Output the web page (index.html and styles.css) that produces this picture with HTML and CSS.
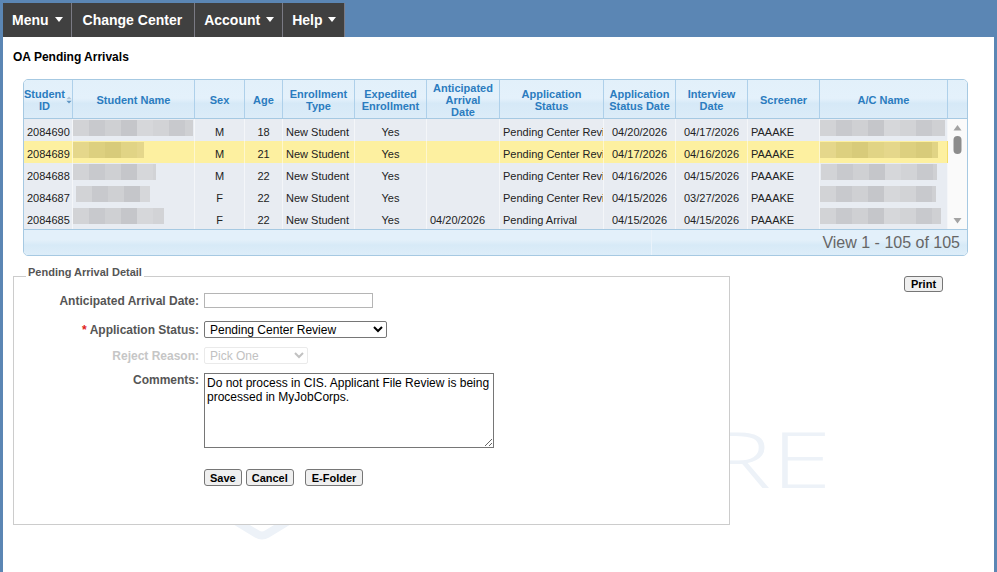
FILE: index.html
```html
<!DOCTYPE html>
<html lang="en">
<head>
  <meta charset="UTF-8" />
  <title>OA Pending Arrivals</title>
  <link rel="stylesheet" href="styles.css">
</head>
<body>
  <div id="topnav">
    <div class="nav-item">Menu <span class="caret"></span></div>
    <div class="nav-item plain">Change Center</div>
    <div class="nav-item">Account <span class="caret"></span></div>
    <div class="nav-item">Help <span class="caret"></span></div>
  </div>

  <div id="page">
    <div class="watermark">JC.RE</div>
    <svg class="wm-chevron" width="64" height="24" viewBox="0 0 64 24">
      <path d="M4 2 L27 16 Q32 19 37 16 L60 2" stroke="#edf2f8" stroke-width="8" fill="none" stroke-linecap="round" stroke-linejoin="round"/>
    </svg>

    <h1 class="page-title">OA Pending Arrivals</h1>

    <div class="grid">
      <div class="grid-head">
        <div class="th">Student<br>ID <svg class="sort" width="8" height="10" viewBox="0 0 8 10"><path d="M0.5 4 L4 0.5 L7.5 4Z" fill="#b3c6d8"/><path d="M0.5 6 L7.5 6 L4 9.5Z" fill="#5f95c3"/></svg></div>
        <div class="th">Student Name</div>
        <div class="th">Sex</div>
        <div class="th">Age</div>
        <div class="th">Enrollment<br>Type</div>
        <div class="th">Expedited<br>Enrollment</div>
        <div class="th">Anticipated<br>Arrival<br>Date</div>
        <div class="th">Application<br>Status</div>
        <div class="th">Application<br>Status Date</div>
        <div class="th">Interview<br>Date</div>
        <div class="th">Screener</div>
        <div class="th">A/C Name</div>
        <div class="th last"></div>
      </div>

      <div class="grid-body">
        <div class="rows">
          <div class="row">
            <div class="td">2084690</div>
            <div class="td masked"><span class="blur w120"></span></div>
            <div class="td c">M</div>
            <div class="td c">18</div>
            <div class="td">New Student</div>
            <div class="td c">Yes</div>
            <div class="td"></div>
            <div class="td status">Pending Center Revi</div>
            <div class="td c">04/20/2026</div>
            <div class="td c">04/17/2026</div>
            <div class="td">PAAAKE</div>
            <div class="td masked"><span class="blur w125"></span></div>
          </div>
          <div class="row selected">
            <div class="td">2084689</div>
            <div class="td masked"><span class="blur w71"></span></div>
            <div class="td c">M</div>
            <div class="td c">21</div>
            <div class="td">New Student</div>
            <div class="td c">Yes</div>
            <div class="td"></div>
            <div class="td status">Pending Center Revi</div>
            <div class="td c">04/17/2026</div>
            <div class="td c">04/16/2026</div>
            <div class="td">PAAAKE</div>
            <div class="td masked"><span class="blur w118"></span></div>
          </div>
          <div class="row">
            <div class="td">2084688</div>
            <div class="td masked"><span class="blur w83"></span></div>
            <div class="td c">M</div>
            <div class="td c">22</div>
            <div class="td">New Student</div>
            <div class="td c">Yes</div>
            <div class="td"></div>
            <div class="td status">Pending Center Revi</div>
            <div class="td c">04/16/2026</div>
            <div class="td c">04/15/2026</div>
            <div class="td">PAAAKE</div>
            <div class="td masked"><span class="blur w116 shift"></span></div>
          </div>
          <div class="row">
            <div class="td">2084687</div>
            <div class="td masked"><span class="blur w74 shift3"></span></div>
            <div class="td c">F</div>
            <div class="td c">22</div>
            <div class="td">New Student</div>
            <div class="td c">Yes</div>
            <div class="td"></div>
            <div class="td status">Pending Center Revi</div>
            <div class="td c">04/15/2026</div>
            <div class="td c">03/27/2026</div>
            <div class="td">PAAAKE</div>
            <div class="td masked"><span class="blur w116"></span></div>
          </div>
          <div class="row">
            <div class="td">2084685</div>
            <div class="td masked"><span class="blur w91"></span></div>
            <div class="td c">F</div>
            <div class="td c">22</div>
            <div class="td">New Student</div>
            <div class="td c">Yes</div>
            <div class="td">04/20/2026</div>
            <div class="td status">Pending Arrival</div>
            <div class="td c">04/15/2026</div>
            <div class="td c">04/15/2026</div>
            <div class="td">PAAAKE</div>
            <div class="td masked"><span class="blur w121"></span></div>
          </div>
        </div>
        <div class="scrollbar">
          <svg width="19" height="110" viewBox="0 0 19 110">
            <path d="M5.5 11.5 L13.5 11.5 L9.5 6Z" fill="#a3a3a3"/>
            <rect x="5.5" y="17" width="8" height="18" rx="4" fill="#8c8c8c"/>
            <path d="M5.5 99 L13.5 99 L9.5 104.5Z" fill="#a3a3a3"/>
          </svg>
        </div>
      </div>

      <div class="pager">
        <div class="pager-left"></div>
        <div class="pager-right">View 1 - 105 of 105</div>
      </div>
    </div>

    <div class="detail">
      <fieldset class="detail-box">
        <legend>Pending Arrival Detail</legend>

        <div class="frow first">
          <label>Anticipated Arrival Date:</label>
          <input type="text" class="date-input">
        </div>
        <div class="frow gap13">
          <label><span class="req">*</span> Application Status:</label>
          <select class="status-select">
            <option selected>Pending Center Review</option>
            <option>Pending Arrival</option>
            <option>Rejected</option>
          </select>
        </div>
        <div class="frow">
          <label class="disabled">Reject Reason:</label>
          <select class="reason-select" disabled>
            <option>Pick One</option>
          </select>
        </div>
        <div class="frow top">
          <label>Comments:</label>
          <textarea class="comments">Do not process in CIS. Applicant File Review is being processed in MyJobCorps.</textarea>
        </div>
        <div class="frow actions">
          <span></span>
          <div class="btns">
            <button>Save</button>
            <button>Cancel</button>
            <button class="efolder">E-Folder</button>
          </div>
        </div>
      </fieldset>

      <button class="print-btn">Print</button>
    </div>
  </div>
</body>
</html>
```

FILE: styles.css
```css
body {
  margin: 0;
  background: #5b86b4;
  font-family: "Liberation Sans", Arial, sans-serif;
  font-size: 12px;
  color: #222;
}

#topnav {
  display: flex;
  height: 34px;
  margin: 3px 0 0 3px;
}

.nav-item {
  display: flex;
  align-items: center;
  gap: 6px;
  padding: 0 8px 0 9px;
  background: #404040;
  border-right: 1px solid #7a7a84;
  color: #fff;
  font-weight: bold;
  font-size: 14px;
}

.nav-item.plain {
  padding: 0 12px 0 11px;
}

.caret {
  width: 0;
  height: 0;
  border-left: 4.5px solid transparent;
  border-right: 4.5px solid transparent;
  border-top: 5px solid #fff;
  margin-top: -1px;
}

#page {
  position: relative;
  background: #fff;
  margin: 0 3px;
  min-height: 535px;
  padding: 13px 0 0 10px;
  box-sizing: border-box;
}

.watermark {
  position: absolute;
  top: 382px;
  right: 162px;
  font-family: "Open Sans", sans-serif;
  font-weight: 300;
  font-size: 78px;
  line-height: 78px;
  color: #edf2f8;
  transform: scaleX(1.4);
  transform-origin: right center;
  z-index: 0;
}

.wm-chevron {
  position: absolute;
  left: 227px;
  top: 481px;
  z-index: 0;
}

.page-title {
  margin: 0;
  font-size: 12px;
  line-height: 14px;
  font-weight: bold;
  color: #000;
}

/* grid */
.grid {
  --cols: 49px 122px 50px 38px 72px 72px 73px 104px 72px 72px 72px 128px;
  width: 945px;
  margin: 15px 0 0 10px;
  border: 1px solid #a6c9e2;
  border-radius: 5px;
  overflow: hidden;
  box-sizing: border-box;
  position: relative;
  z-index: 1;
}

.grid-head {
  display: grid;
  grid-template-columns: var(--cols) 19px;
  height: 39px;
  border-bottom: 1px solid #a6c9e2;
  box-sizing: border-box;
  background: linear-gradient(to bottom, #e2f0fa 0%, #e4f1fb 48%, #d6e9f7 62%, #dcecf8 100%);
}

.th {
  display: flex;
  align-items: center;
  justify-content: center;
  text-align: center;
  padding-top: 1px;
  border-right: 1px solid #aed0ea;
  font-weight: bold;
  font-size: 11px;
  line-height: 12px;
  color: #2b7cbf;
  white-space: nowrap;
}

.th.last {
  border-right: none;
}

.sort {
  margin-left: 1px;
  vertical-align: -1px;
}

.grid-body {
  display: flex;
  border-bottom: 1px solid #a6c9e2;
}

.rows {
  width: 924px;
}

.row {
  display: grid;
  grid-template-columns: var(--cols);
  height: 22px;
  background: #e8ecf2;
}

.row.selected {
  background: #fdf0a0;
}

.td {
  border-right: 1px solid #f4f6f9;
  padding: 4px 3px 0;
  line-height: 18px;
  font-size: 11px;
  white-space: nowrap;
  overflow: hidden;
}

.td.status {
  padding-right: 0;
}

.row.selected .td {
  border-right-color: #fef7cf;
}

.row.selected .td:last-child {
  border-right-color: #f3dd6a;
}

.td.c {
  text-align: center;
}

.td.masked {
  padding: 0;
}

.blur {
  display: block;
  height: 16px;
  margin-top: 1px;
  background: repeating-linear-gradient(90deg, #d2d3d6 0 16px, #c8c9cd 16px 32px, #cfd0d3 32px 48px, #c5c6ca 48px 64px, #d6d7da 64px 80px);
}

.row.selected .blur {
  background: repeating-linear-gradient(90deg, #e5d78b 0 16px, #ddd07f 16px 32px, #d8cb7a 32px 48px, #e1d485 48px 64px);
}

.blur.shift { margin-left: 1px; }
.blur.shift3 { margin-left: 3px; }

.w71 { width: 71px; }
.w74 { width: 74px; }
.w83 { width: 83px; }
.w91 { width: 91px; }
.w116 { width: 116px; }
.w118 { width: 118px; }
.w120 { width: 120px; }
.w121 { width: 121px; }
.w125 { width: 125px; }

.scrollbar {
  width: 19px;
  height: 110px;
  background: #fafafa;
}

.scrollbar svg {
  display: block;
}

.pager {
  display: grid;
  grid-template-columns: 628px 1fr;
  height: 25px;
  background: linear-gradient(to bottom, #e3f0fa 0%, #e3f0fa 40%, #d7eaf7 60%, #ddedf9 100%);
}

.pager-left {
  border-right: 1px solid #eaf3fb;
}

.pager-right {
  text-align: right;
  padding-right: 7px;
  font-size: 16px;
  line-height: 26px;
  color: #666;
}

/* detail form */
.detail {
  display: flex;
  align-items: flex-start;
  margin-top: 10px;
}

.detail-box {
  position: relative;
  z-index: 1;
  width: 717px;
  box-sizing: border-box;
  margin: 0;
  padding: 0 12px 38px;
  border: 1px solid #cccccc;
  background: #fff;
  min-width: 0;
}

.detail-box legend {
  padding: 0 2px 8px;
  font-size: 11px;
  line-height: 12px;
  font-weight: bold;
  color: #555;
}

.frow {
  display: grid;
  grid-template-columns: 173px 1fr;
  column-gap: 5px;
  align-items: center;
  margin-top: 9px;
}

.frow.first { margin-top: 7px; }
.frow.gap13 { margin-top: 13px; }
.frow.top { align-items: start; }
.frow.actions { margin-top: 21px; }

.frow label {
  text-align: right;
  font-weight: bold;
  font-size: 12px;
  line-height: 14px;
  color: #555;
  white-space: nowrap;
}

.frow label.disabled {
  color: #c6c6c6;
}

.req {
  color: #e02020;
}

.date-input {
  width: 169px;
  height: 15px;
  box-sizing: border-box;
  border: 1px solid #b5b5b5;
  margin: 0;
  padding: 0 2px;
  font: 12px "Liberation Sans", Arial, sans-serif;
}

select {
  height: 17px;
  box-sizing: border-box;
  margin: 0;
  padding: 0 1px;
  font: 12px "Liberation Sans", Arial, sans-serif;
  color: #000;
  border: 1px solid #767676;
  border-radius: 2px;
  background: #fff;
}

.status-select {
  width: 183px;
}

.reason-select {
  width: 104px;
  color: #a8a8a8;
  border-color: #e2e2e2;
}

.comments {
  width: 290px;
  height: 75px;
  box-sizing: border-box;
  margin: 0;
  padding: 2px 2px;
  border: 1px solid #767676;
  font: 12px/14px "Liberation Sans", Arial, sans-serif;
  color: #000;
}

.btns {
  display: flex;
}

button {
  height: 17px;
  box-sizing: border-box;
  margin: 0;
  padding: 0 5px;
  font: bold 11px "Liberation Sans", Arial, sans-serif;
  color: #000;
  background: #efefef;
  border: 1px solid #767676;
  border-radius: 3px;
}

.btns button + button {
  margin-left: 4px;
}

.btns .efolder {
  margin-left: 11px;
  padding: 0 6px;
}

.print-btn {
  height: 16px;
  padding: 0 6px;
  margin: 10px 0 0 174px;
}
```
